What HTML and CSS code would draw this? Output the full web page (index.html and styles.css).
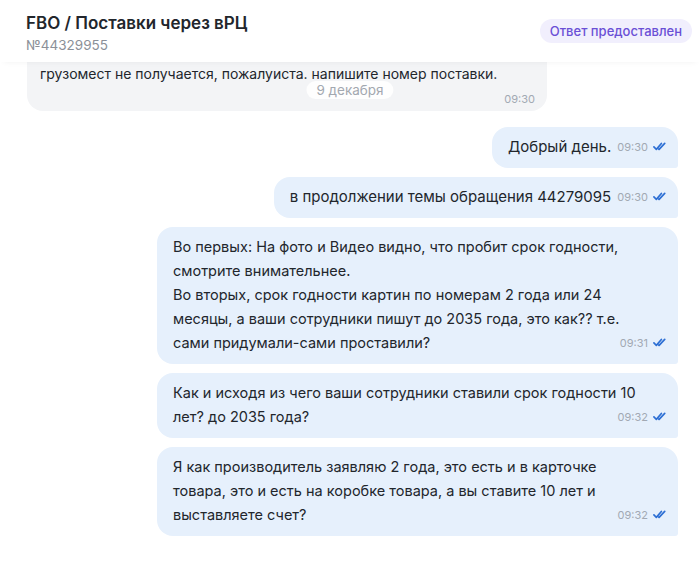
FILE: index.html
```html
<!DOCTYPE html>
<html lang="ru">
<head>
    <meta charset="UTF-8">
    <meta name="viewport" content="width=device-width, initial-scale=1.0">
    <title>FBO / Поставки через вРЦ</title>
    <link rel="stylesheet" href="styles.css">
</head>
<body>
    <div class="ticket">
        <div class="ticket-header">
            <div class="ticket-info">
                <h1 class="ticket-title">FBO / Поставки через вРЦ</h1>
                <div class="ticket-number">№44329955</div>
            </div>
            <span class="status-badge">Ответ предоставлен</span>
        </div>

        <div class="chat">
            <div class="date-pill">9 декабря</div>

            <div class="msg msg-in">
                <div class="bubble">
                    грузомест не получается, пожалуиста. напишите номер поставки.
                    <span class="meta meta-block">09:30</span>
                </div>
            </div>

            <div class="msg msg-out">
                <div class="bubble bubble-short">Добрый день.<span class="meta">09:30 <svg class="ticks" viewBox="0 0 14 9"><path d="M1 5l2.6 2.6L9 1.2M6.2 7.4l.4.2L12.6 1.2"/></svg></span></div>
            </div>

            <div class="msg msg-out">
                <div class="bubble bubble-short">в продолжении темы обращения 44279095<span class="meta">09:30 <svg class="ticks" viewBox="0 0 14 9"><path d="M1 5l2.6 2.6L9 1.2M6.2 7.4l.4.2L12.6 1.2"/></svg></span></div>
            </div>

            <div class="msg msg-out">
                <div class="bubble bubble-wide">Во первых: На фото и Видео видно, что пробит срок годности,<br>смотрите внимательнее.<br>Во вторых, срок годности картин по номерам 2 года или 24<br>месяцы, а ваши сотрудники пишут до 2035 года, это как?? т.е.<br>сами придумали-сами проставили?<span class="meta">09:31 <svg class="ticks" viewBox="0 0 14 9"><path d="M1 5l2.6 2.6L9 1.2M6.2 7.4l.4.2L12.6 1.2"/></svg></span></div>
            </div>

            <div class="msg msg-out">
                <div class="bubble bubble-wide">Как и исходя из чего ваши сотрудники ставили срок годности 10<br>лет? до 2035 года?<span class="meta">09:32 <svg class="ticks" viewBox="0 0 14 9"><path d="M1 5l2.6 2.6L9 1.2M6.2 7.4l.4.2L12.6 1.2"/></svg></span></div>
            </div>

            <div class="msg msg-out">
                <div class="bubble bubble-wide">Я как производитель заявляю 2 года, это есть и в карточке<br>товара, это и есть на коробке товара, а вы ставите 10 лет и<br>выставляете счет?<span class="meta">09:32 <svg class="ticks" viewBox="0 0 14 9"><path d="M1 5l2.6 2.6L9 1.2M6.2 7.4l.4.2L12.6 1.2"/></svg></span></div>
            </div>
        </div>
    </div>
</body>
</html>
```

FILE: styles.css
```css
body {
    margin: 0;
    font-family: Inter, "Noto Sans", Arial, sans-serif;
    color: #22262c;
    background: #fff;
}
.ticket {
    width: 700px;
    height: 562px;
    overflow: hidden;
}
.ticket-header {
    display: flex;
    justify-content: space-between;
    align-items: flex-start;
    padding: 12px 8px 0 26px;
    height: 50px;
    background: #fff;
    position: relative;
    z-index: 2;
    box-shadow: 0 4px 6px -4px rgba(0, 0, 0, 0.06);
}
.ticket-title {
    margin: 0;
    font-size: 17px;
    font-weight: 600;
    line-height: 22px;
}
.ticket-number {
    margin-top: 1px;
    font-size: 13.5px;
    color: #8b9098;
    line-height: 20px;
}
.status-badge {
    margin-top: 7px;
    padding: 3px 10px;
    border-radius: 12px;
    background: #f1effd;
    color: #6a4fd6;
    font-size: 13px;
    font-weight: 500;
    line-height: 18px;
}
.chat {
    position: relative;
    display: flex;
    flex-direction: column;
    gap: 9px;
    padding: 0 22px 0 27px;
}
.date-pill {
    position: absolute;
    top: 19px;
    left: 50%;
    transform: translateX(-50%);
    padding: 0 10px;
    border-radius: 10px;
    background: rgba(255, 255, 255, 0.85);
    color: #a3a8b0;
    font-size: 13.5px;
    line-height: 18px;
}
.msg {
    display: flex;
}
.msg-out {
    justify-content: flex-end;
}
.msg-in {
    margin-bottom: 7px;
}
.bubble {
    max-width: 521px;
    box-sizing: border-box;
    padding: 8px 12px 9px 16px;
    border-radius: 16px 16px 3px 16px;
    background: #e6f0fc;
    font-size: 14.5px;
    line-height: 24px;
}
.bubble-short {
    font-size: 15px;
}
.bubble-wide {
    width: 521px;
}
.msg-in .bubble {
    width: 520px;
    padding: 0 12px 3px 13px;
    border-radius: 0 0 16px 16px;
    background: #f3f4f6;
    font-size: 14px;
}
.meta {
    float: right;
    margin-left: 6px;
    font-size: 11px;
    color: #a2a9b3;
    line-height: 24px;
}
.meta-block {
    float: none;
    display: block;
    text-align: right;
    margin-top: 4px;
    line-height: 18px;
}
.ticks {
    width: 13px;
    height: 9px;
    margin-left: 2px;
    fill: none;
    stroke: #2d6fd4;
    stroke-width: 1.8;
    stroke-linecap: round;
    stroke-linejoin: round;
}
```
